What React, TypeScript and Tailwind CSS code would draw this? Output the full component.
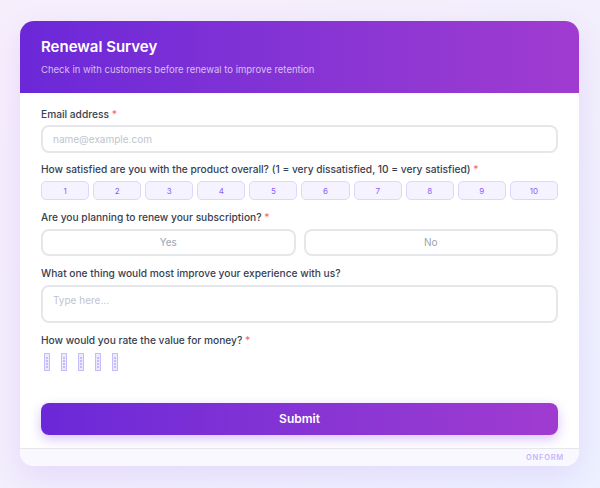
import React from "react";

export default function App() {
  const nums = [1, 2, 3, 4, 5, 6, 7, 8, 9, 10];
  const Req = () => <span className="text-[#f87171]"> *</span>;
  return (
    <div
      className="w-[600px] h-[488px] bg-gradient-to-br from-[#f7eefc] via-[#f3effc] to-[#edf1ff] pt-[21px] px-[20px]"
      style={{ fontFamily: "Inter, 'Noto Sans', sans-serif" }}
    >
      <div className="w-[559px] rounded-[14px] bg-white overflow-hidden shadow-[0_10px_30px_rgba(124,58,237,0.12)]">
        <div className="bg-gradient-to-r from-[#6b27d8] to-[#a03bd0] px-[21px] pt-[16px] h-[72px]">
          <div className="text-white text-[15px] font-semibold leading-[20px]">Renewal Survey</div>
          <div className="text-white/70 text-[9.5px] leading-[14px] mt-[6px]">
            Check in with customers before renewal to improve retention
          </div>
        </div>
        <div className="px-[21px] pt-[14px]">
          <div className="text-[#374151] text-[10.2px] font-medium leading-[14px]">
            Email address<Req />
          </div>
          <div className="mt-[4px] h-[28px] rounded-[8px] border-2 border-[#e5e7eb] flex items-center px-[10px] text-[10px] text-[#c0c4cc]">
            name@example.com
          </div>
          <div className="mt-[9px] text-[#374151] text-[10.2px] font-medium leading-[14px]">
            How satisfied are you with the product overall? (1 = very dissatisfied, 10 = very satisfied)<Req />
          </div>
          <div className="mt-[5px] grid grid-cols-10 gap-[4px]">
            {nums.map((n) => (
              <div
                key={n}
                className="h-[19px] rounded-[5px] border border-[#ddd6fe] bg-[#f5f3ff] flex items-center justify-center text-[8px] text-[#8b5cf6]"
              >
                {n}
              </div>
            ))}
          </div>
          <div className="mt-[10px] text-[#374151] text-[10.2px] font-medium leading-[14px]">
            Are you planning to renew your subscription?<Req />
          </div>
          <div className="mt-[5px] grid grid-cols-2 gap-[8px]">
            {["Yes", "No"].map((t) => (
              <div
                key={t}
                className="h-[27px] rounded-[8px] border-2 border-[#e5e7eb] flex items-center justify-center text-[10px] text-[#9ca3af]"
              >
                {t}
              </div>
            ))}
          </div>
          <div className="mt-[10px] text-[#374151] text-[10.2px] font-medium leading-[14px]">
            What one thing would most improve your experience with us?
          </div>
          <div className="mt-[5px] h-[38px] rounded-[8px] border-2 border-[#e5e7eb] px-[10px] pt-[6px] text-[10px] text-[#c0c4cc]">
            Type here...
          </div>
          <div className="mt-[10px] text-[#374151] text-[10.2px] font-medium leading-[14px]">
            How would you rate the value for money?<Req />
          </div>
          <div className="mt-[6px] flex gap-[11px] pl-[3px]">
            {[0, 1, 2, 3, 4].map((i) => (
              <div key={i} className="w-[6px] h-[18px] border border-[#c4bdfb] bg-[#ede9fe] flex flex-col items-center justify-center gap-[1px]">
                <div className="w-[2px] h-[2px] bg-[#c4bdfb]" />
                <div className="w-[2px] h-[2px] bg-[#c4bdfb]" />
                <div className="w-[2px] h-[2px] bg-[#c4bdfb]" />
                <div className="w-[2px] h-[2px] bg-[#c4bdfb]" />
              </div>
            ))}
          </div>
          <div className="mt-[32px] mb-[13px] h-[32px] rounded-[8px] bg-gradient-to-r from-[#6b27d8] to-[#a03bd0] shadow-[0_4px_12px_rgba(124,58,237,0.3)] flex items-center justify-center text-white text-[12px] font-semibold">
            Submit
          </div>
        </div>
        <div className="border-t border-[#e5e7eb] bg-[#faf8ff] h-[18px] flex items-center justify-end pr-[15px]">
          <span className="text-[7.5px] font-semibold tracking-[0.1em] text-[#c4b5fd]">ONFORM</span>
        </div>
      </div>
    </div>
  );
}
